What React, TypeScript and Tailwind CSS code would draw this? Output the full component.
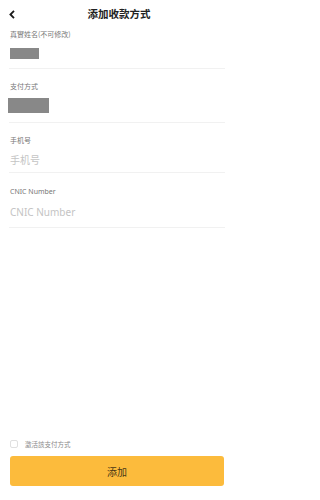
import React from "react";

const FONT = "font-['Noto_Sans_CJK_SC','Noto_Sans',sans-serif]";

export default function App() {
  return (
    <div className={`w-[234px] h-[500px] bg-white flex flex-col ${FONT}`}>
      <div className="relative h-[26px] flex items-center justify-center">
        <svg className="absolute left-[9px] top-[10px]" width="6" height="9" viewBox="0 0 6 9">
          <polyline points="5,0.8 1.4,4.5 5,8.2" fill="none" stroke="#1a1a1a" strokeWidth="1.8" strokeLinejoin="miter" />
        </svg>
        <div className="text-[10.5px] leading-[14px] font-bold text-[#222] mt-[1px] ml-[4px]">添加收款方式</div>
      </div>
      <div className="flex flex-col px-[9px]">
        <div className="flex flex-col border-b border-[#f1f1f1] pt-[3px] pb-[9px]">
          <div className="pl-[1px] text-[7px] leading-[10px] text-[#777]">真實姓名(不可修改)</div>
          <div className="mt-[9px] ml-[1px] w-[29px] h-[11px] bg-[#888]" />
        </div>
        <div className="flex flex-col border-b border-[#f1f1f1] pt-[12px] pb-[9px]">
          <div className="pl-[1px] text-[7px] leading-[10px] text-[#777]">支付方式</div>
          <div className="mt-[7px] ml-[-1px] w-[41px] h-[15px] bg-[#888]" />
        </div>
        <div className="flex flex-col border-b border-[#f1f1f1] pt-[12px] pb-[5px]">
          <div className="pl-[1px] text-[7px] leading-[10px] text-[#777]">手机号</div>
          <div className="mt-[8px] pl-[1px] text-[10px] leading-[14px] text-[#c4c4c4]">手机号</div>
        </div>
        <div className="flex flex-col border-b border-[#f1f1f1] pt-[14px] pb-[8px]">
          <div className="pl-[1px] text-[7px] leading-[10px] text-[#777] font-['Noto_Sans',sans-serif]">CNIC Number</div>
          <div className="mt-[8px] pl-[1px] text-[10px] leading-[14px] text-[#c4c4c4] font-['Noto_Sans',sans-serif]">CNIC Number</div>
        </div>
      </div>
      <div className="mt-auto flex flex-col px-[10px] pb-[14px]">
        <div className="flex items-center gap-[7px]">
          <div className="w-[8px] h-[8px] rounded-[2px] border border-[#e0e0e0]" />
          <div className="text-[6.5px] leading-[10px] text-[#888]">激活該支付方式</div>
        </div>
        <button className="mt-[7px] h-[30px] w-full rounded-[3px] bg-[#fcbb3c] flex items-center justify-center text-[10px] text-[#4a3716]">
          添加
        </button>
      </div>
    </div>
  );
}
